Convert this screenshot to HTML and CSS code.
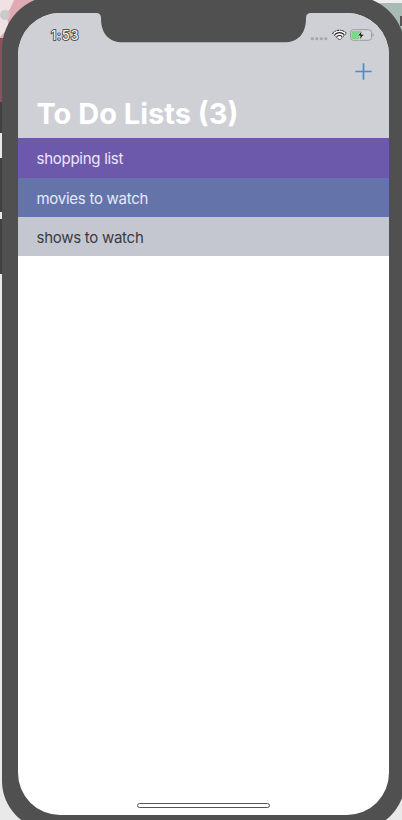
FILE: index.html
```
<!DOCTYPE html>
<html lang="en">
<head>
<meta charset="utf-8">
<title>To Do Lists</title>
<link rel="stylesheet" href="styles.css">
</head>
<body>
<div class="desktop">
  <svg class="wallpaper" viewBox="0 0 402 820" aria-hidden="true">
    <path fill="#e9e9e9" d="M0 0h402v820H0z"/>
    <path fill="#dfaab3" d="M0 0h36L0 42z"/>
    <path fill="#eee2e3" d="M0 0h14L10 9l-4 4 3 14-9 10z"/>
    <circle cx="5" cy="15" r="5" fill="#ccc9ca"/>
    <path fill="#87535d" d="M0 38h8v64H0z"/>
    <path fill="#404040" d="M0 102h4v31H0zM0 158h4v54H0zM0 219h4v55H0z"/>
    <path fill="#a9bbb5" d="M374 3h28v35h-18z"/>
    <path fill="#eee" d="M368 0h34v3h-34z"/>
    <path fill="#555" d="M400 16h2v10h-2z"/>
  </svg>
  <main class="phone">
    <section class="screen">
      <header class="header">
        <div class="status">
          <time class="clock">1:53</time>
          <svg class="indicators" viewBox="0 0 68 16" aria-hidden="true">
            <g fill="#a7a8ab"><circle cx="4.3" cy="10.7" r="1.6"/><circle cx="8.8" cy="10.7" r="1.6"/><circle cx="13.3" cy="10.7" r="1.6"/><circle cx="17.8" cy="10.7" r="1.6"/></g>
            <g fill="none" stroke-linejoin="round">
              <path d="M24.500 5.100Q31.500-.7 38.500 5.100L31.500 12z" fill="#fff" stroke="#222" stroke-width="1" stroke-dasharray="2 .6"/>
              <path d="M26.800 6.500q4.700-3.700 9.400 0M28.800 8.500q2.700-2 5.400 0" stroke="#222" stroke-width="1.100"/>
            </g>
            <rect x="42.500" y="1.700" width="21" height="10.600" rx="2.800" fill="#d4d6d9" stroke="#999b9d"/>
            <path fill="#79d885" d="M45 3h8.500v8H45q-1.500 0-1.500-1.500v-5Q43.500 3 45 3z"/>
            <path fill="#8f9193" d="M64.600 5q2 2 0 4z"/>
            <path fill="#202020" stroke="#eee" stroke-width=".7" d="M54.200 2.200 49.400 7.900h2.800l-.8 4.300 5-6h-3z"/>
          </svg>
        </div>
        <div class="toolbar">
          <button class="add" aria-label="Add list"><svg viewBox="0 0 16 16"><path d="M8 .3v15.400M.3 8h15.400"/></svg></button>
        </div>
        <h1 class="title">To Do Lists (3)</h1>
      </header>
      <ul class="lists">
        <li class="list purple">shopping list</li>
        <li class="list blue">movies to watch</li>
        <li class="list gray">shows to watch</li>
      </ul>
      <div class="home"></div>
    </section>
    <svg class="notch" viewBox="0 0 222 31" aria-hidden="true"><path d="M0 0h222v1h-4q-5 0-5 5c0 16-8 24.300-22 24.300H30C16 30.300 8 22 8 6Q8 1 3 1H0z"/></svg>
  </main>
</div>
</body>
</html>
```
FILE: styles.css
```
* { box-sizing: border-box; }
body { margin: 0; font-family: Inter, "Liberation Sans", sans-serif; }
.desktop { position: relative; width: 402px; height: 820px; overflow: hidden; }
.wallpaper { position: absolute; inset: 0; width: 402px; height: 820px; }
.phone {
  position: absolute; left: 2px; top: -4px; width: 403px; height: 834px;
  padding: 17px 16px 19px; background: #505050; border-radius: 53px 53px 49px 49px;
}
.screen {
  display: flex; flex-direction: column; width: 371px; height: 802px;
  overflow: hidden; background: #fff; border-radius: 42px 42px 42px 42px;
}
.notch { position: absolute; left: 91px; top: 16px; width: 222px; height: 31px; fill: #505050; }
.header { height: 125px; background: #ced0d5; }
.status { display: flex; justify-content: space-between; height: 45px; padding: 15px 13px 0 33px; }
.clock {
  font-size: 13px; line-height: 15px; font-weight: 500; letter-spacing: .7px; color: #f4f4f4;
  -webkit-text-stroke: 1.5px #333; paint-order: stroke fill;
}
.indicators { width: 68px; height: 16px; }
.toolbar { display: flex; justify-content: flex-end; height: 36px; padding: 5px 17px 0 0; }
.add { display: block; width: 17px; height: 17px; padding: 0; border: 0; background: none; }
.add svg { display: block; width: 17px; height: 17px; fill: none; stroke: #4b86e6; stroke-width: 1.6; }
.title { margin: 0; padding-left: 18.5px; font-size: 29px; line-height: 39px; font-weight: 700; letter-spacing: 0; color: #fff; white-space: nowrap; }
.lists { margin: 0; padding: 0; list-style: none; }
.list { height: 39.5px; padding-left: 18.5px; font-size: 15px; line-height: 41px; letter-spacing: -.27px; white-space: nowrap; }
.purple { background: #6c59ab; color: #eee5fb; }
.blue { background: #6474aa; color: #e2ebfa; }
.gray { height: 39px; background: #c4c7d0; color: #3a3b3e; }
.home { width: 133px; height: 5px; margin: auto 0 7px 119px; border: 1px solid #555; border-radius: 3px; background: #fff; }
```
